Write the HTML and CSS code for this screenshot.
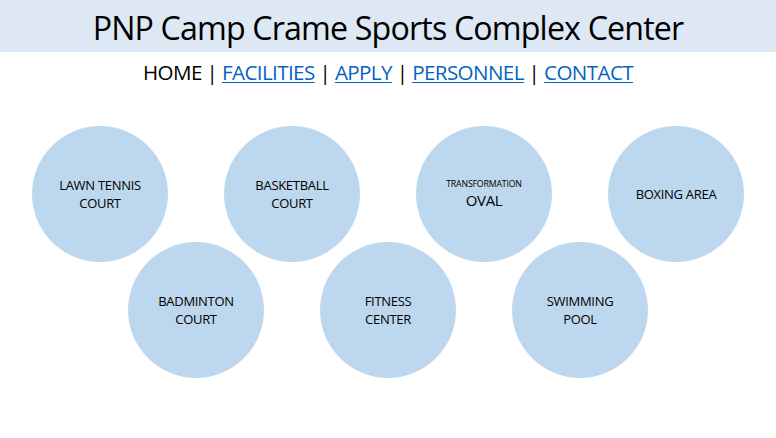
FILE: index.html
```html
<!DOCTYPE html>
<html>
<head>
<meta charset="utf-8">
<link rel="stylesheet" href="styles.css">
</head>
<body>
<header class="banner"><h1 class="title">PNP Camp Crame Sports Complex Center</h1></header>
<nav class="nav">HOME | <a href="#">FACILITIES</a> | <a href="#">APPLY</a> | <a href="#">PERSONNEL</a> | <a href="#">CONTACT</a></nav>
<main class="facilities">
  <div class="row">
    <div class="circle"><span>LAWN TENNIS<br>COURT</span></div>
    <div class="circle"><span>BASKETBALL<br>COURT</span></div>
    <div class="circle"><span class="stack"><small class="tiny">TRANSFORMATION</small><span class="big">OVAL</span></span></div>
    <div class="circle"><span>BOXING AREA</span></div>
  </div>
  <div class="row row2">
    <div class="circle"><span>BADMINTON<br>COURT</span></div>
    <div class="circle"><span>FITNESS<br>CENTER</span></div>
    <div class="circle"><span>SWIMMING<br>POOL</span></div>
  </div>
</main>
</body>
</html>
```
FILE: styles.css
```css
html, body { margin: 0; padding: 0; background: #fff; }
body { font-family: "Open Sans", "Liberation Sans", sans-serif; color: #000; }
.banner { background: #dde8f4; height: 52px; display: flex; align-items: center; justify-content: center; }
.title { margin: 0; font-weight: 400; font-size: 32.2px; letter-spacing: -0.85px; line-height: 1; padding-top: 4px; }
.nav { text-align: center; font-size: 20.6px; letter-spacing: -0.6px; margin-top: 7px; line-height: 27px; }
.nav a { color: #0563c1; text-decoration: underline; text-underline-offset: 2px; text-decoration-thickness: 1px; }
.facilities { margin-top: 40px; }
.row { display: flex; justify-content: center; gap: 56px; }
.row2 { margin-top: -20px; }
.circle { width: 136px; height: 136px; border-radius: 50%; background: #bdd7ee; display: flex; align-items: center; justify-content: center; text-align: center; font-size: 13px; letter-spacing: -0.3px; line-height: 18px; }
.stack { display: flex; flex-direction: column; align-items: center; margin-top: 0; }
.tiny { font-size: 8.8px; letter-spacing: -0.2px; line-height: 12px; }
.big { font-size: 15px; line-height: 20px; }
```
